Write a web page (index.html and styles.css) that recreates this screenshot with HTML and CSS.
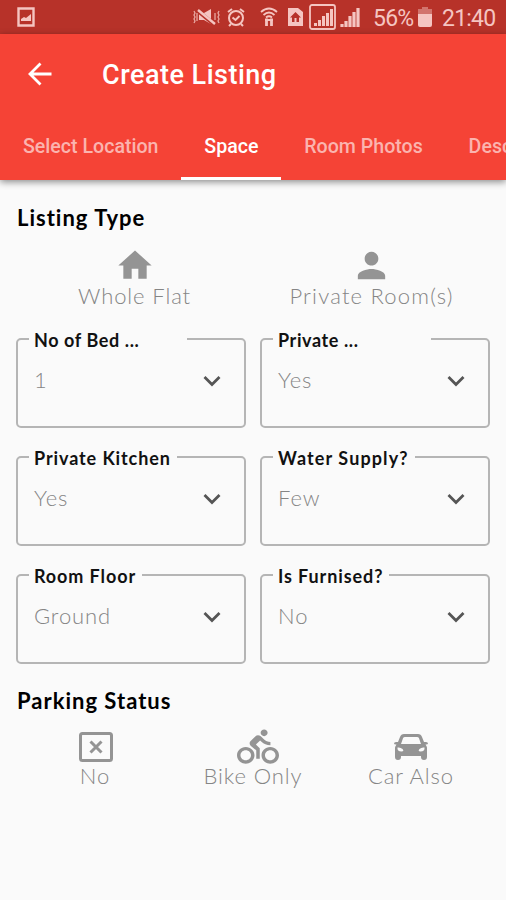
FILE: index.html
```
<!DOCTYPE html>
<html lang="en">
<head>
    <meta charset="UTF-8">
    <meta name="viewport" content="width=device-width, initial-scale=1.0">
    <link rel="stylesheet" href="styles.css">
    <title>Create Listing</title>
</head>
<body>
    <div class="status-bar">
        <svg class="status-picture" width="18" height="20" viewBox="0 0 18 20"><path d="M1.500 1.500h15v17h-15z" fill="none" stroke="currentColor" stroke-width="2.400"/><path d="M4 14v-2l3-2 2 1 5-4v7z" fill="currentColor"/></svg>
        <div class="status-icons">
            <svg class="icon-mute" width="27" height="18" viewBox="0 0 27 18" fill="none" stroke="currentColor"><path d="M6 5h5l7-4v15l-7-4H6z" fill="currentColor" stroke="none"/><path d="M5 3l17 14" stroke="#b73229" stroke-width="4"/><path d="M5 2l17 14" stroke-width="2.400"/><path d="M1 3l1 2-1 2 1 2-1 2 1 2-1 2M4 5v8M26 3l-1 2 1 2-1 2 1 2-1 2 1 2M22 5v7" stroke-width="1.300" opacity=".8"/></svg>
            <svg class="icon-alarm" width="18" height="20" viewBox="0 0 18 20" fill="none" stroke="currentColor" stroke-width="2"><circle cx="9" cy="11" r="7"/><path d="M5.500 10.500L8.500 13l4-4M1 5l4-3M17 5l-4-3M4 17l-2 2M14 17l2 2"/></svg>
            <svg class="icon-wifi" width="18" height="20" viewBox="0 0 18 20" fill="none" stroke="currentColor" stroke-width="1.800"><path d="M1 5q8-7 16 0M3.500 8q5.500-5 11 0M6 10.500q3-2.500 6 0"/><path d="M6.500 11.500V19M11.500 11.500V19" stroke-width="2.800"/><path d="M5 13h8" stroke-width="2"/></svg>
            <svg class="icon-sim" width="15" height="18" viewBox="0 0 15 18"><path d="M0 0h10l5 4v14H0z" fill="currentColor"/><path d="M7.500 4L2 9.500h2V14h7V9.500h2z" fill="#b73229"/><path d="M6.500 10h2v4h-2z" fill="currentColor"/></svg>
            <svg class="icon-signal-one" width="27" height="26" viewBox="0 0 27 26" fill="none" stroke="currentColor"><rect x="1" y="1" width="25" height="24" rx="2" stroke-width="1.800"/><path d="M6.500 19v3M10.500 16v6M14.500 12v10M18.500 9v13M22.500 5v17" stroke-width="3"/></svg>
            <svg class="icon-signal-two" width="20" height="20" viewBox="0 0 20 20" fill="none" stroke="currentColor" stroke-width="3.200"><path d="M2 17v3M6 14v6M10 9v11M14 5v15M18 1v19"/></svg>
            <span class="battery-text">56%</span>
            <svg class="icon-battery" width="14" height="20" viewBox="0 0 14 20"><path d="M4 0h6v2h4v5H0V2h4z" fill="currentColor" opacity=".45"/><path d="M0 7h14v11q0 2-2 2H2q-2 0-2-2z" fill="currentColor"/></svg>
            <span class="clock">21:40</span>
        </div>
    </div>

    <div class="header">
        <div class="title-bar">
            <svg class="back" width="24" height="24" viewBox="0 0 24 24" fill="none" stroke="#fff" stroke-width="2.800"><path d="M23.500 12H2M12.500 1.500L2 12l10.500 10.500"/></svg>
            <h1>Create Listing</h1>
        </div>
        <div class="tabs">
            <a class="tab">Select Location</a>
            <a class="tab active">Space</a>
            <a class="tab">Room Photos</a>
            <a class="tab">Description</a>
        </div>
    </div>

    <div class="content">
        <h2>Listing Type</h2>
        <div class="options listing-options">
            <div class="option">
                <svg width="40" height="41" viewBox="0 0 24 24"><path d="M10 20v-6h4v6h5v-8h3L12 3 2 12h3v8z"/></svg>
                <span>Whole Flat</span>
            </div>
            <div class="option">
                <svg width="43" height="41" viewBox="0 0 24 24"><path d="M12 12c2.210 0 4-1.790 4-4s-1.790-4-4-4-4 1.790-4 4 1.790 4 4 4zm0 2c-2.670 0-8 1.340-8 4v2h16v-2c0-2.660-5.330-4-8-4z"/></svg>
                <span class="private-rooms">Private Room(s)</span>
            </div>
        </div>

        <div class="fields">
            <fieldset>
                <legend class="legend-cut">No of Bed ...</legend>
                <span>1</span>
                <svg class="arrow" viewBox="0 0 18 12"><path d="M1.500 2L9 9.500 16.500 2"/></svg>
            </fieldset>
            <fieldset>
                <legend class="legend-cut">Private ...</legend>
                <span>Yes</span>
                <svg class="arrow" viewBox="0 0 18 12"><path d="M1.500 2L9 9.500 16.500 2"/></svg>
            </fieldset>
            <fieldset>
                <legend>Private Kitchen</legend>
                <span>Yes</span>
                <svg class="arrow" viewBox="0 0 18 12"><path d="M1.500 2L9 9.500 16.500 2"/></svg>
            </fieldset>
            <fieldset>
                <legend class="legend-water">Water Supply?</legend>
                <span>Few</span>
                <svg class="arrow" viewBox="0 0 18 12"><path d="M1.500 2L9 9.500 16.500 2"/></svg>
            </fieldset>
            <fieldset>
                <legend>Room Floor</legend>
                <span>Ground</span>
                <svg class="arrow" viewBox="0 0 18 12"><path d="M1.500 2L9 9.500 16.500 2"/></svg>
            </fieldset>
            <fieldset>
                <legend>Is Furnised?</legend>
                <span>No</span>
                <svg class="arrow" viewBox="0 0 18 12"><path d="M1.500 2L9 9.500 16.500 2"/></svg>
            </fieldset>
        </div>

        <h2 class="parking-title">Parking Status</h2>
        <div class="options parking-options">
            <div class="option">
                <svg width="34" height="40" viewBox="0 0 34 40" class="line-icon"><rect x="1.500" y="6.500" width="31" height="27" rx="2"/><path d="M11.500 14.500l11 11M22.500 14.500l-11 11"/></svg>
                <span>No</span>
            </div>
            <div class="option">
                <svg class="bike" width="42" height="40" viewBox="0 0 24 24" preserveAspectRatio="none"><path d="M15.500 5.500c1.100 0 2-.9 2-2s-.9-2-2-2-2 .9-2 2 .9 2 2 2zM5 12c-2.800 0-5 2.200-5 5s2.200 5 5 5 5-2.200 5-5-2.200-5-5-5zm0 8c-1.700 0-3-1.300-3-3s1.300-3 3-3 3 1.300 3 3-1.300 3-3 3zm5.800-9.500l2.400-2.400.8.8c1.300 1.300 3 2.100 5.100 2.100V9c-1.500 0-2.700-.6-3.600-1.500l-1.900-1.900c-.5-.4-1-.6-1.600-.6s-1.100.2-1.400.6L7.800 8.400c-.4.400-.6.900-.6 1.400 0 .6.200 1.100.6 1.400L11 14v5h2v-6.200l-2.200-2.300zM19 12c-2.800 0-5 2.200-5 5s2.200 5 5 5 5-2.200 5-5-2.200-5-5-5zm0 8c-1.700 0-3-1.300-3-3s1.300-3 3-3 3 1.300 3 3-1.300 3-3 3z"/></svg>
                <span>Bike Only</span>
            </div>
            <div class="option">
                <svg width="34" height="40" viewBox="0 0 34 40"><path fill-rule="evenodd" d="M10 7h14q3 0 4 3l2 5h2q2 0 2 1.500 0 1-2 1h-.5q1.500 2 1.500 4V30q0 3-3 3t-3-3v-1H7v1q0 3-3 3t-3-3v-8.500q0-2 1.500-4H2q-2 0-2-1Q0 15 2 15h2l2-5q1-3 4-3zm1 3q-1.500 0-2 1.300L7 17h20l-2-5.700Q24.500 10 23 10zM3.500 20.500q-.5 4 4 4 3 0 1-2.500-2-2-5-1.500zm27 0q.5 4-4 4-3 0-1-2.500 2-2 5-1.500z"/></svg>
                <span>Car Also</span>
            </div>
        </div>
    </div>
</body>
</html>
```
FILE: styles.css
```
* {
    box-sizing: border-box;
}

body {
    margin: 0;
    height: 900px;
    overflow: hidden;
    background-color: #fafafa;
    font-family: Lato, sans-serif;
}

svg {
    display: block;
    flex-shrink: 0;
}

.status-bar {
    height: 34px;
    padding: 0 10px 0 17px;
    display: flex;
    align-items: center;
    justify-content: space-between;
    background-color: #b73229;
    color: #f5c5c1;
    font-family: Roboto, sans-serif;
    font-size: 23px;
}

.status-icons {
    display: flex;
    align-items: center;
}

.status-bar span {
    padding-top: 2px;
}

.icon-alarm {
    margin-left: 7px;
}

.icon-wifi {
    margin-left: 15px;
}

.icon-sim {
    margin-left: 10px;
}

.icon-signal-one {
    margin-left: 6px;
}

.icon-signal-two {
    margin-left: 4px;
}

.battery-text {
    width: 40px;
    margin-left: 13px;
    letter-spacing: -0.8px;
}

.icon-battery {
    margin-left: 5px;
}

.clock {
    width: 54px;
    margin-left: 10px;
    letter-spacing: -0.8px;
}

.header {
    height: 146px;
    position: relative;
    background-color: #f54336;
    color: #fff;
    font-family: Roboto, sans-serif;
    box-shadow: 0 2px 7px rgba(0, 0, 0, 0.45);
}

.title-bar {
    height: 79px;
    padding-left: 28px;
    display: flex;
    align-items: center;
}

h1 {
    margin: 2px 0 0 50px;
    font-size: 27px;
    font-weight: 500;
    letter-spacing: 0.5px;
}

.tabs {
    height: 67px;
    display: flex;
    overflow: hidden;
}

.tab {
    flex-shrink: 0;
    padding: 0 22.800px 0 23px;
    border-bottom: 3px solid transparent;
    color: #fbb4af;
    font-size: 19.600px;
    font-weight: 500;
    line-height: 67px;
}

.tab.active {
    color: #fff;
    border-color: #fff;
}

.content {
    padding: 23px 16px 0;
}

h2 {
    margin: 0 1px;
    height: 30px;
    font-size: 22px;
    font-weight: 700;
    line-height: 30px;
    letter-spacing: 1px;
}

.options {
    display: flex;
    color: #858585;
    font-size: 22px;
    font-weight: 300;
    letter-spacing: 0.9px;
}

.option {
    flex: 1;
    display: flex;
    flex-direction: column;
    align-items: center;
    line-height: 24px;
    white-space: nowrap;
}

.option svg {
    fill: #949494;
}

.option span {
    margin-top: -2px;
}

.option .line-icon {
    margin-left: 2px;
    fill: none;
    stroke: #949494;
    stroke-width: 3;
}

.private-rooms {
    letter-spacing: 1.200px;
}

.bike {
    margin-left: 10px;
}

.listing-options {
    height: 96px;
    padding-top: 12px;
}

.fields {
    display: grid;
    grid-template-columns: 1fr 1fr;
    gap: 19px 14px;
}

fieldset {
    height: 99px;
    min-width: 0;
    margin: 0;
    padding: 19px 23px 0 16px;
    display: flex;
    justify-content: space-between;
    border: 2px solid #b5b5b5;
    border-radius: 5px;
    color: #858585;
    font-size: 22px;
    font-weight: 300;
    line-height: 24px;
    letter-spacing: 0.9px;
}

legend {
    height: 20px;
    margin-left: -5px;
    padding: 0 6px 0 5px;
    color: #111;
    font-size: 18px;
    font-weight: 700;
    line-height: 22px;
    white-space: nowrap;
}

.legend-cut {
    width: 158px;
    letter-spacing: 0.6px;
}

.legend-water {
    letter-spacing: 1.100px;
}

.arrow {
    width: 18px;
    height: 12px;
    margin-top: 7px;
    fill: none;
    stroke: #555;
    stroke-width: 2.800;
}

.parking-title {
    margin-top: 22px;
}

.parking-options {
    padding-top: 11px;
}

.parking-options .option span {
    margin-top: -3px;
}
```
